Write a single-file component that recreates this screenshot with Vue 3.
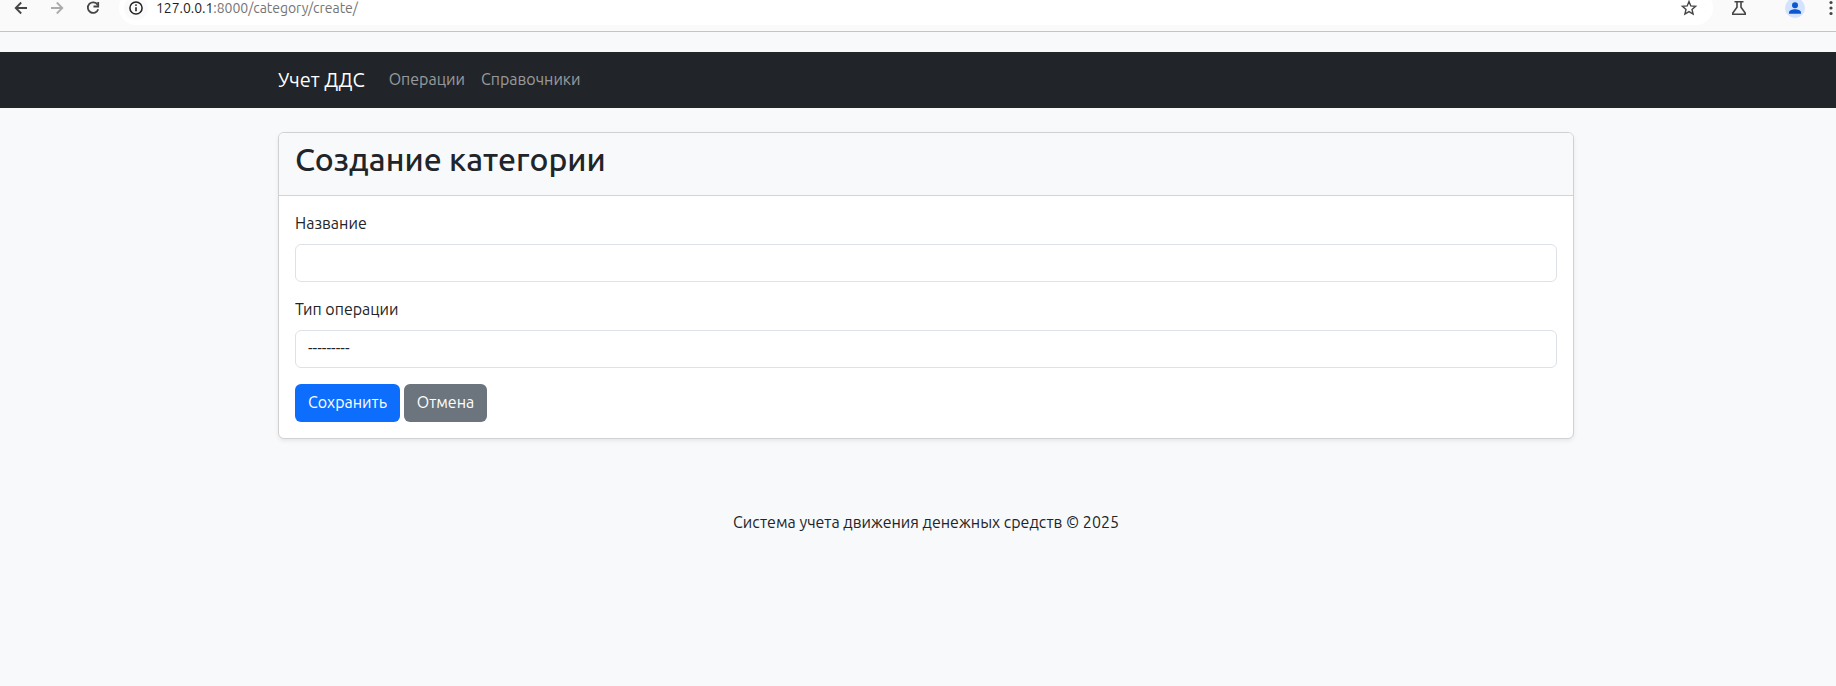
<script setup>
import { ref } from 'vue'

const name = ref('')
const links = ['Операции', 'Справочники']
</script>

<template>
  <div class="screen">
    <header class="toolbar">
      <div class="toolbar-row">
        <svg class="back" width="20" height="20" viewBox="0 0 20 20" fill="none" stroke="#454545" stroke-width="1.8">
          <path d="M16 10H5M10.2 4.5 4.7 10l5.5 5.5" />
        </svg>
        <svg class="forward" width="20" height="20" viewBox="0 0 20 20" fill="none" stroke="#ababab" stroke-width="1.8">
          <path d="M4 10h11M9.8 4.5l5.5 5.5-5.5 5.5" />
        </svg>
        <svg class="reload" width="20" height="20" viewBox="0 0 20 20" fill="none" stroke="#454545" stroke-width="1.8">
          <path d="M14.6 6.7A5.3 5.3 0 1 0 15.2 11.2" />
          <path d="M15.2 3.9v4.6h-4.7" />
        </svg>
        <div class="address">
          <span class="info">
            <svg width="16" height="16" viewBox="0 0 16 16">
              <circle cx="8" cy="8" r="6.1" fill="none" stroke="#222" stroke-width="1.5" />
              <path d="M8 7.3v4" stroke="#222" stroke-width="1.6" />
              <circle cx="8" cy="5.1" r="0.95" fill="#222" />
            </svg>
          </span>
          <span class="host">127.0.0.1</span><span class="path">:8000/category/create/</span>
          <svg class="star" width="18" height="18" viewBox="0 0 18 18" fill="none" stroke="#454545" stroke-width="1.4">
            <path d="M9 2.5 10.8 6.9l4.8.4-3.6 3.1 1.1 4.7L9 12.6l-4.1 2.5L6 10.4 2.4 7.3l4.8-.4z" />
          </svg>
        </div>
        <svg class="flask" width="20" height="20" viewBox="0 0 20 20" fill="none" stroke="#454545" stroke-width="1.6">
          <path d="M5.5 3.8h9M8 4v5.2L3.8 15.1v1.1h12.4v-1.1L12 9.2V4" />
        </svg>
        <svg class="avatar" width="20" height="20" viewBox="0 0 20 20">
          <circle cx="10" cy="10" r="10" fill="#d3e3fd" />
          <circle cx="10" cy="7.2" r="3" fill="#0b57d0" />
          <path d="M4 15.8v-1.3c0-2.2 3.5-3.3 6-3.3s6 1.1 6 3.3v1.3z" fill="#0b57d0" />
        </svg>
        <svg class="dots" width="8" height="20" viewBox="0 0 8 20" fill="#454545">
          <circle cx="4" cy="4.5" r="1.6" />
          <circle cx="4" cy="10" r="1.6" />
          <circle cx="4" cy="15.5" r="1.6" />
        </svg>
      </div>
    </header>

    <nav class="navbar">
      <div class="container nav-inner">
        <a class="brand">Учет ДДС</a>
        <a v-for="l in links" :key="l" class="nav-link">{{ l }}</a>
      </div>
    </nav>

    <main class="container">
      <section class="card">
        <div class="card-header"><h2>Создание категории</h2></div>
        <form class="card-body" @submit.prevent>
          <div class="field">
            <label for="name">Название</label>
            <input id="name" v-model="name" class="control" type="text" />
          </div>
          <div class="field">
            <label for="type">Тип операции</label>
            <div id="type" class="control">---------</div>
          </div>
          <div class="actions">
            <button class="btn save" type="submit">Сохранить</button>
            <button class="btn cancel" type="button">Отмена</button>
          </div>
        </form>
      </section>
      <footer class="footer">Система учета движения денежных средств © 2025</footer>
    </main>
  </div>
</template>

<style>
body {
  background: #f8f9fb;
  overflow: hidden;
}
</style>

<style scoped>
.screen {
  width: 1836px;
  height: 686px;
  overflow: hidden;
  background: #f8f9fb;
  color: #212529;
  font: 400 16px/24px Ubuntu, "Noto Sans", sans-serif;
}
.screen * { box-sizing: border-box; }
.toolbar {
  height: 32px;
  overflow: hidden;
  background: #fafafa;
  border-bottom: 1px solid #c4c4c4;
}
.toolbar-row {
  display: flex;
  align-items: center;
  height: 34px;
  margin-top: -9px;
}
.toolbar-row svg { display: block; flex: none; }
.back { margin-left: 11px; }
.forward { margin-left: 16px; }
.reload { margin-left: 16px; }
.address {
  display: flex;
  align-items: center;
  width: 1594px;
  height: 34px;
  margin-left: 16px;
  padding-left: 5px;
  border-radius: 17px;
  background: #fff;
  font-size: 14px;
  letter-spacing: -0.04px;
}
.info {
  display: flex;
  align-items: center;
  justify-content: center;
  width: 24px;
  height: 24px;
  margin-right: 8px;
  border-radius: 50%;
  background: #fafafa;
}
.host { color: #1f1f1f; }
.path { color: #757575; }
.star { margin-left: auto; margin-right: 15px; }
.flask { margin-left: 16px; }
.avatar { margin-left: 36px; }
.dots { margin-left: 22px; }

.container {
  width: 1320px;
  margin-left: 266px;
  padding: 0 12px;
}
.navbar {
  height: 56px;
  margin-top: 20px;
  background: #212529;
}
.nav-inner {
  display: flex;
  align-items: center;
  height: 56px;
}
.brand {
  margin-right: 16px;
  color: #fff;
  font-size: 20px;
  line-height: 30px;
}
.nav-link {
  padding: 0 8px 2px;
  color: rgba(255, 255, 255, 0.55);
}
.card {
  margin-top: 24px;
  border: 1px solid #d0d1d2;
  border-radius: 6px;
  background: #fff;
  box-shadow: 0 2px 4px rgba(0, 0, 0, 0.075);
}
.card-header {
  padding: 7px 16px 9px;
  border-bottom: 1px solid #d3d4d5;
  border-radius: 5px 5px 0 0;
  background: #f8f9fb;
}
h2 {
  margin: 0 0 8px;
  font-size: 32px;
  font-weight: 500;
  line-height: 38.4px;
}
.card-body { padding: 16px; }
.field { margin-bottom: 16px; }
label {
  display: block;
  margin-bottom: 10px;
  line-height: 22px;
}
.control {
  display: block;
  width: 100%;
  height: 38px;
  padding: 5px 12px 7px;
  border: 1px solid #dee2e6;
  border-radius: 6px;
  background: #fff;
  color: #212529;
  font: inherit;
  outline: none;
}
.actions { display: flex; gap: 4px; }
.btn {
  height: 38px;
  padding: 0 0 2px;
  border: 0;
  border-radius: 6px;
  color: #fff;
  font: inherit;
}
.save { width: 105px; background: #0d6efd; }
.cancel { width: 83px; background: #6c757d; }
.footer {
  margin-top: 71px;
  text-align: center;
}
</style>
